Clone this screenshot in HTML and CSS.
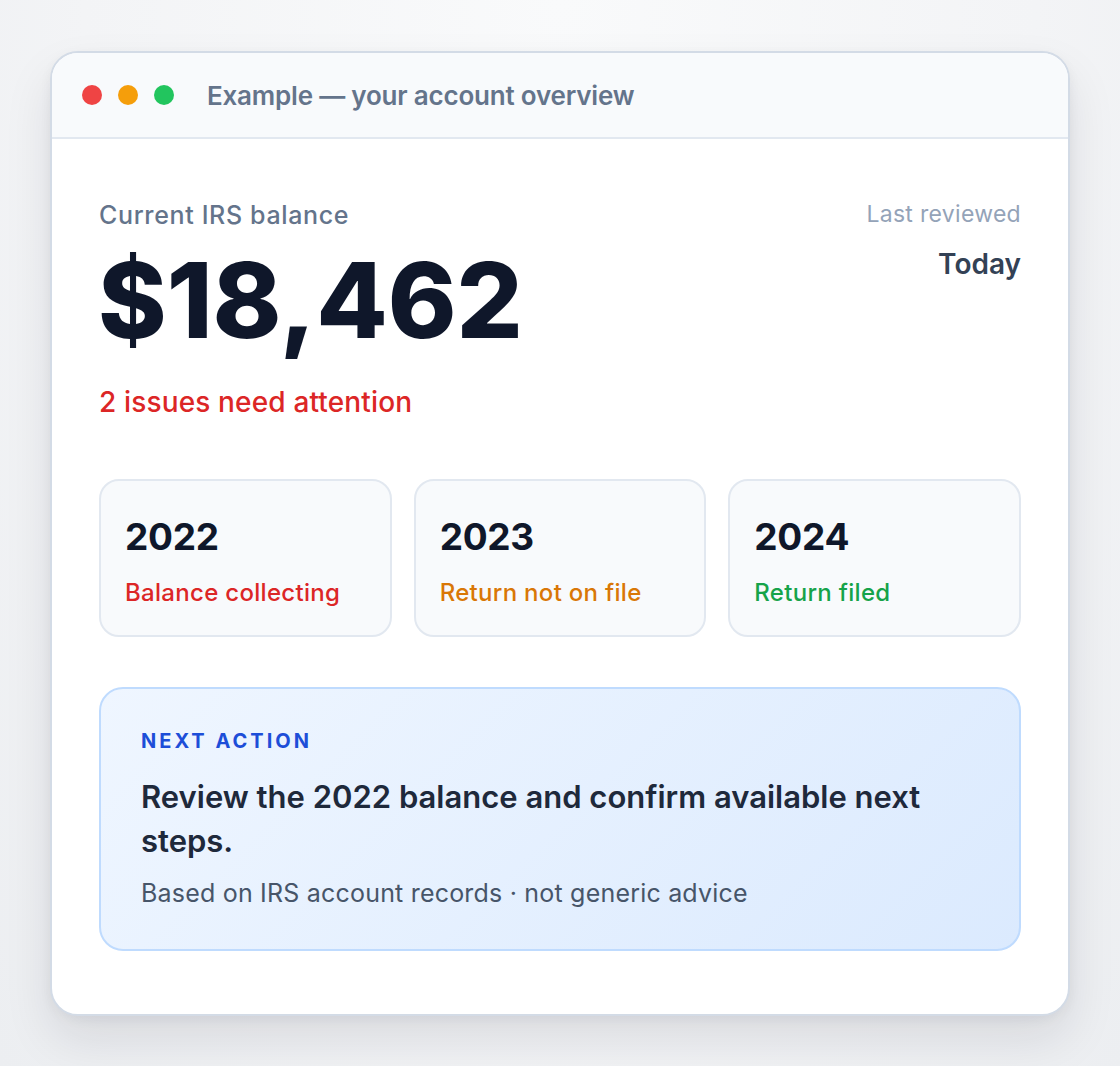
FILE: index.html
```html
<!DOCTYPE html>
<html lang="en">
<head>
<meta charset="utf-8">
<title>Account overview</title>
<link rel="stylesheet" href="styles.css">
</head>
<body>
<div class="window">
  <div class="titlebar">
    <span class="dot red"></span>
    <span class="dot amber"></span>
    <span class="dot green"></span>
    <span class="title">Example — your account overview</span>
  </div>
  <div class="content">
    <div class="top">
      <div class="balance">
        <div class="label">Current IRS balance</div>
        <div class="amount">$18,462</div>
        <div class="issues">2 issues need attention</div>
      </div>
      <div class="reviewed">
        <div class="rev-label">Last reviewed</div>
        <div class="rev-value">Today</div>
      </div>
    </div>
    <div class="years">
      <div class="year-card">
        <div class="year">2022</div>
        <div class="status s-red">Balance collecting</div>
      </div>
      <div class="year-card">
        <div class="year">2023</div>
        <div class="status s-amber">Return not on file</div>
      </div>
      <div class="year-card">
        <div class="year">2024</div>
        <div class="status s-green">Return filed</div>
      </div>
    </div>
    <div class="action">
      <div class="action-kicker">NEXT ACTION</div>
      <div class="action-title">Review the 2022 balance and confirm available next steps.</div>
      <div class="action-note">Based on IRS account records · not generic advice</div>
    </div>
  </div>
</div>
</body>
</html>
```
FILE: styles.css
```css
* { box-sizing: border-box; }
html, body { margin: 0; }
body {
  width: 1120px;
  height: 1066px;
  overflow: hidden;
  font-family: Inter, "Noto Sans", sans-serif;
  background: radial-gradient(ellipse at 50% 0%, #f9fafb 0%, #f3f4f6 60%, #eceef1 100%);
  padding-top: 51px;
  padding-left: 50px;
}
.window {
  width: 1020px;
  height: 965px;
  background: #ffffff;
  border: 2px solid #d3dbe6;
  border-radius: 28px;
  overflow: hidden;
  box-shadow: 0 24px 48px rgba(15, 23, 42, 0.10), 0 4px 12px rgba(15, 23, 42, 0.05);
}
.titlebar {
  height: 86px;
  background: #f8fafc;
  border-bottom: 2px solid #e2e8f0;
  display: flex;
  align-items: center;
  padding-left: 30px;
}
.dot {
  width: 20px;
  height: 20px;
  border-radius: 50%;
  margin-right: 16px;
}
.red { background: #ef4444; }
.amber { background: #f59e0b; }
.green { background: #22c55e; }
.title {
  margin-left: 17px;
  font-size: 26px;
  font-weight: 600;
  color: #64748b;
  letter-spacing: -0.2px;
}
.content {
  padding: 60px 47px 48px 47px;
}
.top {
  display: flex;
  justify-content: space-between;
  align-items: flex-start;
}
.label {
  font-size: 25px;
  font-weight: 500;
  color: #64748b;
  line-height: 32px;
  letter-spacing: 0.65px;
}
.amount {
  font-size: 104px;
  font-weight: 800;
  color: #0f172a;
  letter-spacing: 0;
  line-height: 110px;
  margin-top: 14px;
  margin-left: -1px;
}
.issues {
  font-size: 28px;
  font-weight: 500;
  color: #dc2626;
  line-height: 36px;
  margin-top: 29px;
  letter-spacing: 0.15px;
}
.reviewed {
  text-align: right;
}
.rev-label {
  font-size: 23px;
  color: #94a3b8;
  line-height: 30px;
  letter-spacing: 0.3px;
}
.rev-value {
  font-size: 28px;
  font-weight: 600;
  color: #334155;
  line-height: 36px;
  margin-top: 17px;
}
.years {
  display: grid;
  grid-template-columns: 1fr 1fr 1fr;
  gap: 22px;
  margin-top: 59px;
}
.year-card {
  height: 158px;
  background: #f8fafc;
  border: 2px solid #e2e8f0;
  border-radius: 20px;
  padding: 32px 24px 0 24px;
}
.year {
  font-size: 37px;
  font-weight: 700;
  color: #0f172a;
  line-height: 48px;
  letter-spacing: -0.3px;
}
.status {
  font-size: 24px;
  font-weight: 500;
  line-height: 30px;
  margin-top: 17px;
  letter-spacing: 0.3px;
}
.s-red { color: #dc2626; }
.s-amber { color: #d97706; }
.s-green { color: #16a34a; }
.action {
  margin-top: 50px;
  height: 264px;
  border: 2px solid #bfdbfe;
  border-radius: 24px;
  background: linear-gradient(135deg, #eff6ff 0%, #dbeafe 100%);
  padding: 38px 40px 0 40px;
}
.action-kicker {
  font-size: 20px;
  font-weight: 700;
  letter-spacing: 3px;
  color: #1d4ed8;
  line-height: 28px;
}
.action-title {
  font-size: 31px;
  font-weight: 600;
  color: #1e293b;
  line-height: 44px;
  margin-top: 20px;
}
.action-note {
  font-size: 25px;
  color: #475569;
  line-height: 32px;
  margin-top: 14px;
  letter-spacing: 0.2px;
}
```
